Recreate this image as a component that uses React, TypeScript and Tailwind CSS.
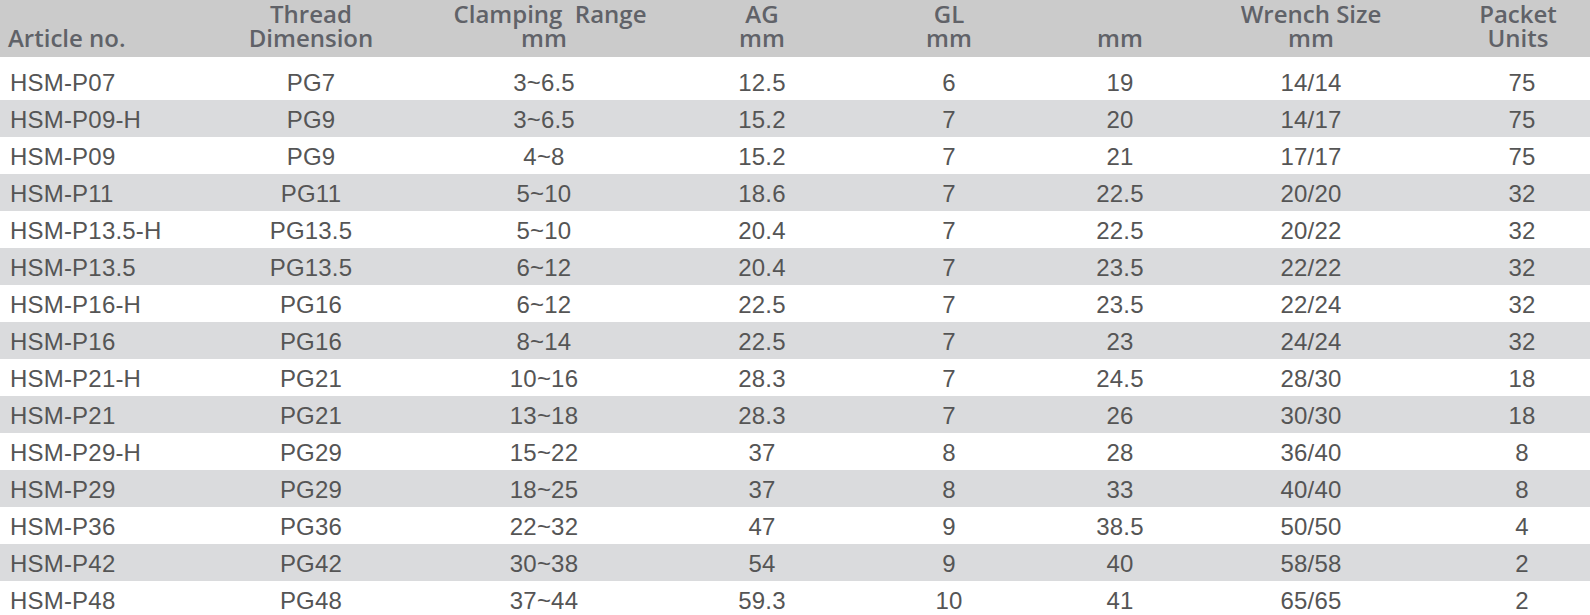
import React from "react";

const rows: string[][] = [
  ["HSM-P07", "PG7", "3~6.5", "12.5", "6", "19", "14/14", "75"],
  ["HSM-P09-H", "PG9", "3~6.5", "15.2", "7", "20", "14/17", "75"],
  ["HSM-P09", "PG9", "4~8", "15.2", "7", "21", "17/17", "75"],
  ["HSM-P11", "PG11", "5~10", "18.6", "7", "22.5", "20/20", "32"],
  ["HSM-P13.5-H", "PG13.5", "5~10", "20.4", "7", "22.5", "20/22", "32"],
  ["HSM-P13.5", "PG13.5", "6~12", "20.4", "7", "23.5", "22/22", "32"],
  ["HSM-P16-H", "PG16", "6~12", "22.5", "7", "23.5", "22/24", "32"],
  ["HSM-P16", "PG16", "8~14", "22.5", "7", "23", "24/24", "32"],
  ["HSM-P21-H", "PG21", "10~16", "28.3", "7", "24.5", "28/30", "18"],
  ["HSM-P21", "PG21", "13~18", "28.3", "7", "26", "30/30", "18"],
  ["HSM-P29-H", "PG29", "15~22", "37", "8", "28", "36/40", "8"],
  ["HSM-P29", "PG29", "18~25", "37", "8", "33", "40/40", "8"],
  ["HSM-P36", "PG36", "22~32", "47", "9", "38.5", "50/50", "4"],
  ["HSM-P42", "PG42", "30~38", "54", "9", "40", "58/58", "2"],
  ["HSM-P48", "PG48", "37~44", "59.3", "10", "41", "65/65", "2"],
];

const grid =
  "grid grid-cols-[200px_222px_244px_192px_182px_160px_222px_168px] w-[1590px]";

export default function App() {
  return (
    <div className="w-[1590px] h-[615px] overflow-hidden bg-white">
      <div
        className={`${grid} h-[57px] bg-[#cbcbcb] text-[#606268] items-end pb-[8px] text-[24px] leading-[23.5px] font-semibold`}
        style={{ fontFamily: '"Open Sans", sans-serif' }}
      >
        <div className="pl-[8px]">Article no.</div>
        <div className="text-center">
          <div>Thread</div>
          <div>Dimension</div>
        </div>
        <div className="text-center">
          <div className="pl-[12px] whitespace-pre">Clamping  Range</div>
          <div>mm</div>
        </div>
        <div className="text-center">
          <div>AG</div>
          <div>mm</div>
        </div>
        <div className="text-center">
          <div>GL</div>
          <div>mm</div>
        </div>
        <div className="text-center">
          <div>mm</div>
        </div>
        <div className="text-center">
          <div>Wrench Size</div>
          <div>mm</div>
        </div>
        <div className="text-center pl-[24px]">
          <div>Packet</div>
          <div>Units</div>
        </div>
      </div>
      <div className="h-[6px]" />
      <div
        className="text-[24px] tracking-[0.2px] text-[#555555]"
        style={{ fontFamily: '"Liberation Sans", Arial, sans-serif' }}
      >
        {rows.map((r, i) => (
          <div
            key={i}
            className={`${grid} h-[37px] items-center pt-[2px] ${
              i % 2 === 1 ? "bg-[#dadbdd]" : "bg-white"
            }`}
          >
            <div className="pl-[10px]">{r[0]}</div>
            <div className="text-center">{r[1]}</div>
            <div className="text-center">{r[2]}</div>
            <div className="text-center">{r[3]}</div>
            <div className="text-center">{r[4]}</div>
            <div className="text-center">{r[5]}</div>
            <div className="text-center">{r[6]}</div>
            <div className="text-center pl-[32px]">{r[7]}</div>
          </div>
        ))}
      </div>
    </div>
  );
}
